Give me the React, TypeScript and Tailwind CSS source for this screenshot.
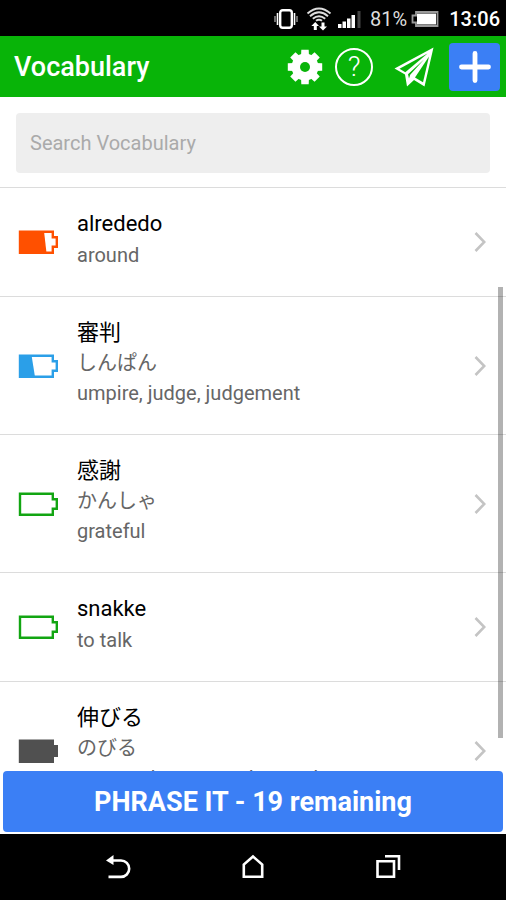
import React from 'react';

type Level = 'high' | 'medium' | 'empty' | 'full';

interface Word {
  term: string;
  reading?: string;
  meaning: string;
  level: Level;
}

const words: Word[] = [
  { term: 'alrededo', meaning: 'around', level: 'high' },
  { term: '審判', reading: 'しんぱん', meaning: 'umpire, judge, judgement', level: 'medium' },
  { term: '感謝', reading: 'かんしゃ', meaning: 'grateful', level: 'empty' },
  { term: 'snakke', meaning: 'to talk', level: 'empty' },
  { term: '伸びる', reading: 'のびる', meaning: 'to stretch, to extend, to make progress', level: 'full' },
];

const levels: Record<Level, { color: string; fill?: string }> = {
  high: { color: '#ff5000', fill: 'M1 1H26L28.5 23H1Z' },
  medium: { color: '#2b9fe8', fill: 'M1 1H13.5L17 23H1Z' },
  empty: { color: '#12a512' },
  full: { color: '#505050', fill: 'M1 1H35V7H39V17H35V23H1Z' },
};

const Battery: React.FC<{ level: Level }> = ({ level }) => {
  const { color, fill } = levels[level];
  return (
    <svg viewBox="0 0 40 24" className="w-10 h-6 mt-1.5 shrink-0" aria-hidden="true">
      <path d="M2 1.7H34.8V7.2H38.8V16.8H34.8V22.8H2Z" fill="none" stroke={color} strokeWidth="2.4" />
      {fill && <path d={fill} fill={color} />}
    </svg>
  );
};

const StatusBar = () => (
  <div className="h-9 shrink-0 bg-black text-white flex items-center justify-end pr-1.5 pt-0.5">
    <svg viewBox="0 0 24 22" className="w-6 h-[22px]" fill="none" stroke="#fff" aria-hidden="true">
      <rect x="6.2" y="2.2" width="11.6" height="17.6" rx="2.5" strokeWidth="2.4" />
      <path d="M3.5 5V17M20.5 5V17" strokeWidth="1.6" />
      <path d="M1 8V14M23 8V14" stroke="#999" strokeWidth="1.4" />
    </svg>
    <svg viewBox="0 0 26 24" className="w-[26px] h-6 ml-2" fill="none" stroke="#ddd" aria-hidden="true">
      <path d="M1.5 6.5Q13-3.5 24.5 6.5M4 9.2Q13 1.5 22 9.2M6.8 11.8Q13 6.5 19.2 11.8M10 13.8Q13 11.5 16 13.8" strokeWidth="1.9" />
      <path d="M9.3 15L5.3 19H7.8V23H10.8V19H13ZM17 23.5L13 19.5H15.5V15.5H18.5V19.5H21Z" fill="#fff" stroke="none" />
    </svg>
    <svg viewBox="0 0 24 20" className="w-6 h-5 ml-1.5 mr-2" fill="#fff" aria-hidden="true">
      <path d="M0 15H3.5V19H0ZM4.5 12.5H8V19H4.5ZM9 9.5H12.5V19H9ZM13.5 6H17V19H13.5Z" />
      <path d="M19.5 2H22.5V19H19.5Z" fill="#444" />
    </svg>
    <span className="text-xl leading-6 text-[#ddd]">81%</span>
    <svg viewBox="0 0 28 18" className="w-7 h-[18px] ml-1 mr-2.5" aria-hidden="true">
      <path d="M5 2H26.5V16H5V12.5H1.5V5.5H5Z" fill="none" stroke="#999" strokeWidth="1.8" />
      <rect x="6" y="3.5" width="19" height="11" fill="#fff" />
    </svg>
    <span className="text-xl leading-6 font-medium">13:06</span>
  </div>
);

const Gear = () => (
  <svg viewBox="0 0 36 36" className="w-9 h-9" aria-hidden="true">
    <g fill="#fff">
      {[0, 45, 90, 135].map((angle) => (
        <path key={angle} d="M14.3 .8H21.7L22 8V28L21.7 35.2H14.3L14 28V8Z" transform={`rotate(${angle} 18 18)`} />
      ))}
      <circle cx="18" cy="18" r="13.4" />
    </g>
    <circle cx="18" cy="18" r="5" fill="#08b408" />
  </svg>
);

const Header = () => (
  <header className="h-[61px] shrink-0 bg-[#08b408] text-white flex items-center pl-3.5 pr-1.5">
    <h1 className="flex-1 text-[27px] leading-8 font-medium">Vocabulary</h1>
    <button aria-label="Settings" className="flex">
      <Gear />
    </button>
    <button aria-label="Help" className="ml-3 w-[38px] h-[38px] rounded-full border-2 border-white text-[28px] leading-8 font-light flex items-center justify-center">
      ?
    </button>
    <button aria-label="Send" className="ml-5 flex">
      <svg viewBox="0 0 42 42" className="w-[42px] h-[42px]" aria-hidden="true">
        <path d="M40.5 1.5L1.5 22.5L12 28.5L14 40.5L21 34L31.5 40.5Z" fill="#fff" />
        <path d="M34.5 7.5L6.5 22.8L12.3 26.2Z" fill="#08b408" />
        <path d="M36 10.5L22 31.5L30 36.3Z" fill="#08b408" />
        <path d="M31 13.5L15 28.2L16 32.5L17.2 28.8Z" fill="#08b408" />
      </svg>
    </button>
    <button aria-label="Add word" className="ml-3.5 w-[51px] h-12 rounded bg-[#3b7ff5] flex items-center justify-center">
      <svg viewBox="0 0 32 32" className="w-8 h-8" stroke="#fff" strokeWidth="4.8" strokeLinecap="round" aria-hidden="true">
        <path d="M16 2.5V29.5M2.5 16H29.5" />
      </svg>
    </button>
  </header>
);

const WordRow: React.FC<{ word: Word }> = ({ word }) => (
  <li className="border-b border-[#dcdcdc]">
    <a href="#" className="flex items-center pl-[18px] pr-5 pt-5 pb-[26px]">
      <Battery level={word.level} />
      <div className="flex-1 min-w-0 ml-[19px]">
        <div className="text-[22px] leading-8 text-black">{word.term}</div>
        {word.reading && <div className="text-xl leading-[29px] text-[#666]">{word.reading}</div>}
        <div className="text-xl leading-[30px] text-[#666]">{word.meaning}</div>
      </div>
      <svg viewBox="0 0 12 20" className="w-3 h-5 mt-1.5 shrink-0" fill="none" stroke="#c4c4c4" strokeWidth="2.6" aria-hidden="true">
        <path d="M1.5 1L10.3 10L1.5 19" />
      </svg>
    </a>
  </li>
);

const NavBar = () => (
  <nav className="h-[66px] shrink-0 bg-black flex items-center justify-center gap-[107px]">
    <button aria-label="Back">
      <svg viewBox="0 0 28 28" className="w-7 h-7" fill="none" stroke="#fff" strokeWidth="2.6" aria-hidden="true">
        <path d="M5 7.5H17A8.2 8.2 0 0 1 17 23.9H4.5" />
        <path d="M9.5 2L2 7.5L9.5 12Z" fill="#fff" stroke="none" />
      </svg>
    </button>
    <button aria-label="Home">
      <svg viewBox="0 0 28 28" className="w-7 h-7" fill="none" stroke="#fff" strokeWidth="2.6" aria-hidden="true">
        <path d="M4.8 23.7V11.5L14 3.5L23.2 11.5V23.7Z" />
      </svg>
    </button>
    <button aria-label="Recent apps">
      <svg viewBox="0 0 28 28" className="w-7 h-7" fill="none" stroke="#fff" strokeWidth="2.6" aria-hidden="true">
        <path d="M3.5 8.3H20V23.7H3.5Z" />
        <path d="M11 3.3H25V17" />
      </svg>
    </button>
  </nav>
);

export default function App() {
  return (
    <div className="h-screen flex flex-col overflow-hidden bg-white font-['Roboto','Noto_Sans_CJK_JP',sans-serif]">
      <StatusBar />
      <Header />
      <main className="relative flex-1 min-h-0 overflow-hidden">
        <div className="px-4 pt-4 pb-3.5 border-b border-[#dcdcdc]">
          <input
            type="search"
            aria-label="Search Vocabulary"
            placeholder="Search Vocabulary"
            className="w-full h-[60px] px-3.5 rounded bg-[#eee] text-xl text-black placeholder:text-[#aaa] outline-none"
          />
        </div>
        <ul>
          {words.map((word) => (
            <WordRow key={word.term} word={word} />
          ))}
        </ul>
        <div className="absolute right-[3px] top-[190px] w-[5px] h-[451px] bg-black/30" />
      </main>
      <div className="shrink-0 px-[3px] pb-0.5">
        <button className="w-full h-[61px] rounded bg-[#3b7ff5] text-white text-[27px] leading-8 font-bold">
          PHRASE IT - 19 remaining
        </button>
      </div>
      <NavBar />
    </div>
  );
}
